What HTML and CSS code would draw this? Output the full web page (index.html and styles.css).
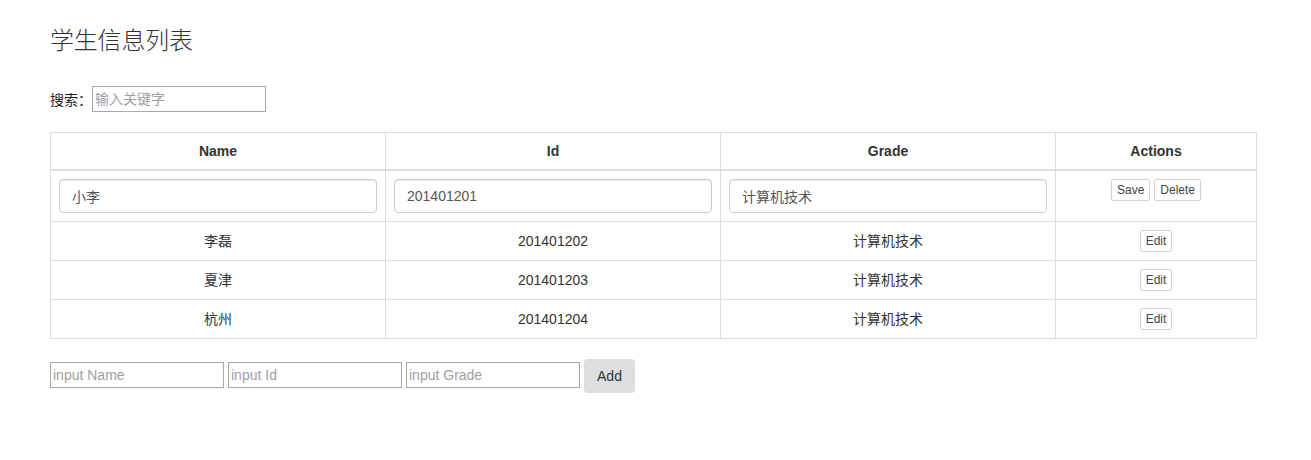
FILE: index.html
```html
<!DOCTYPE html>
<html lang="zh">
<head>
<meta charset="utf-8">
<title>学生信息列表</title>
<link rel="stylesheet" href="styles.css">
</head>
<body>
<div class="page">
  <h2 class="title">学生信息列表</h2>
  <div class="search">
    <label class="search-label">搜索：</label>
    <input class="plain-input search-input" type="text" placeholder="输入关键字">
  </div>
  <table class="grid">
    <colgroup>
      <col class="c-name"><col class="c-id"><col class="c-grade"><col class="c-actions">
    </colgroup>
    <thead>
      <tr><th>Name</th><th>Id</th><th>Grade</th><th>Actions</th></tr>
    </thead>
    <tbody>
      <tr class="editing">
        <td><input class="form-control" type="text" value="小李"></td>
        <td><input class="form-control" type="text" value="201401201"></td>
        <td><input class="form-control" type="text" value="计算机技术"></td>
        <td><div class="acts"><button class="btn-sm">Save</button><button class="btn-sm">Delete</button></div></td>
      </tr>
      <tr>
        <td>李磊</td><td>201401202</td><td>计算机技术</td>
        <td><div class="acts"><button class="btn-sm">Edit</button></div></td>
      </tr>
      <tr>
        <td>夏津</td><td>201401203</td><td>计算机技术</td>
        <td><div class="acts"><button class="btn-sm">Edit</button></div></td>
      </tr>
      <tr>
        <td>杭州</td><td>201401204</td><td>计算机技术</td>
        <td><div class="acts"><button class="btn-sm">Edit</button></div></td>
      </tr>
    </tbody>
  </table>
  <div class="add-row">
    <input class="plain-input" type="text" placeholder="input Name">
    <input class="plain-input" type="text" placeholder="input Id">
    <input class="plain-input" type="text" placeholder="input Grade">
    <button class="btn-add">Add</button>
  </div>
</div>
</body>
</html>
```
FILE: styles.css
```css
* { box-sizing: border-box; }
html, body { margin: 0; padding: 0; background: #fff; }
body {
  font-family: "Liberation Sans", Arial, "Noto Sans CJK SC", sans-serif;
  font-size: 14px;
  line-height: 20px;
  color: #333;
}
.page {
  width: 1206px;
  margin-left: 50px;
  padding-top: 26px;
}
.title {
  margin: 0 0 34px 0;
  font-family: "Noto Sans CJK SC", sans-serif;
  font-size: 24px;
  line-height: 26px;
  font-weight: 300;
  color: #333;
  letter-spacing: -0.2px;
}
.search {
  display: flex;
  align-items: center;
  height: 26px;
}
.search-label {
  font-family: "Noto Sans CJK SC", sans-serif;
  font-size: 14px;
  color: #222;
  width: 42px;
}
.plain-input {
  width: 174px;
  height: 26px;
  margin: 0;
  padding: 1px 2px;
  border: 1px solid #a9a9a9;
  font-family: "Liberation Sans", Arial, "Noto Sans CJK SC", sans-serif;
  font-size: 14px;
  color: #333;
  background: #fff;
}
.plain-input::placeholder { color: #a0a0a0; }
.search-input::placeholder { font-family: "Noto Sans CJK SC", sans-serif; }
.grid {
  width: 1206px;
  margin-top: 20px;
  border-collapse: collapse;
  table-layout: fixed;
  border: 1px solid #ddd;
}
.c-name, .c-id, .c-grade { width: 335px; }
.c-actions { width: 201px; }
.grid th, .grid td {
  border: 1px solid #ddd;
  padding: 8px;
  text-align: center;
  vertical-align: top;
  line-height: 20px;
}
.grid th {
  font-weight: bold;
  border-bottom-width: 2px;
  color: #333;
}
.grid td { color: #333; }
.grid tbody tr:not(.editing) td { padding-top: 9px; padding-bottom: 9px; }
.grid tbody tr:not(.editing) td .acts { margin-top: -1px; margin-bottom: -1px; }
.form-control {
  display: block;
  width: 100%;
  height: 34px;
  margin: 0;
  padding: 6px 12px;
  border: 1px solid #ccc;
  border-radius: 4px;
  box-shadow: inset 0 1px 1px rgba(0,0,0,.075);
  font-family: "Liberation Sans", Arial, "Noto Sans CJK SC", sans-serif;
  font-size: 14px;
  color: #555;
  background: #fff;
}
.acts {
  display: flex;
  justify-content: center;
  gap: 4px;
}
.btn-sm {
  height: 22px;
  margin: 0;
  padding: 0 5px;
  border: 1px solid #d4d4d4;
  border-radius: 2px;
  background: #fff;
  font-family: "Liberation Sans", Arial, sans-serif;
  font-size: 12px;
  line-height: 20px;
  color: #444;
}
.add-row {
  display: flex;
  align-items: flex-start;
  gap: 4px;
  margin-top: 20px;
}
.add-row .plain-input { margin-top: 3px; }
.btn-add {
  width: 51px;
  height: 34px;
  margin: 0;
  padding: 0;
  border: none;
  border-radius: 4px;
  background: #dedede;
  font-family: "Liberation Sans", Arial, sans-serif;
  font-size: 14px;
  color: #333;
}
```
